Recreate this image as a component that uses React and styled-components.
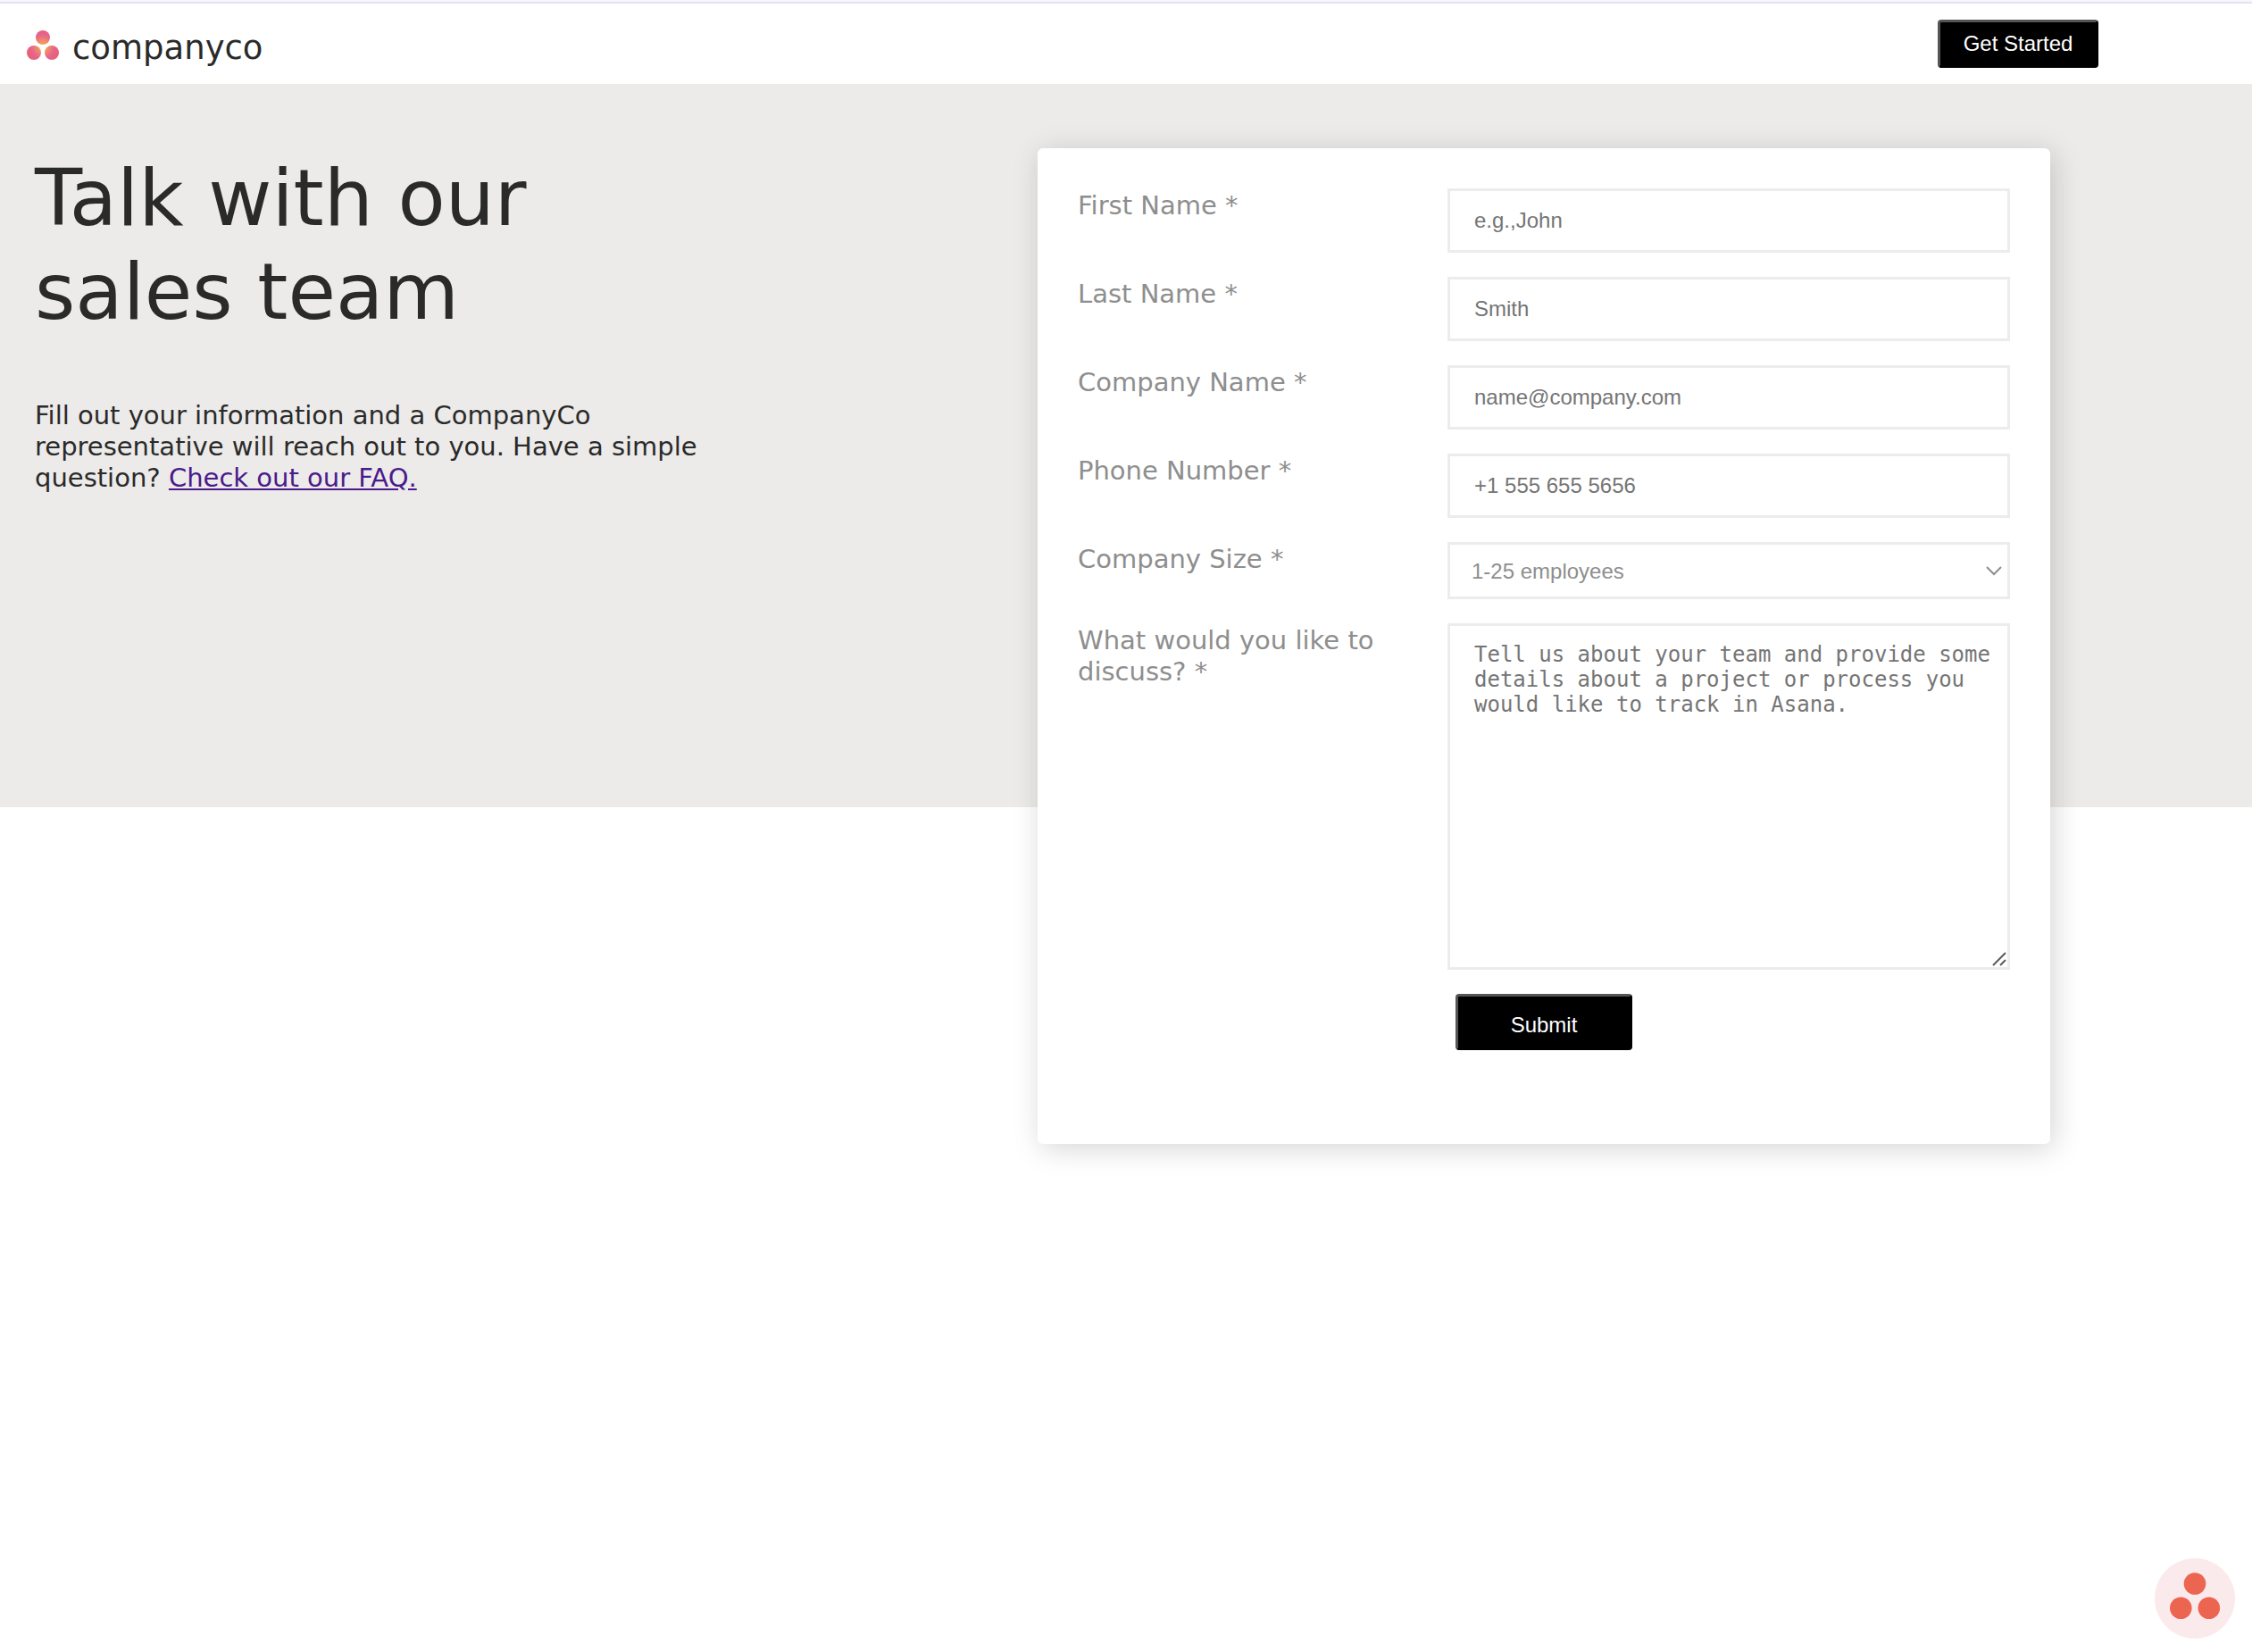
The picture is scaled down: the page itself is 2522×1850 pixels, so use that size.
import React from "react";
import styled, { createGlobalStyle } from "styled-components";

const sans = '"DejaVu Sans", Verdana, sans-serif';
const controlFont = '"Liberation Sans", Arial, sans-serif';
const ink = "#2a2a2a";

const GlobalStyle = createGlobalStyle`
  * { box-sizing: border-box; }
  body {
    margin: 0;
    background: #ffffff;
    color: ${ink};
    font-family: ${sans};
  }
`;

const Page = styled.div`
  min-height: 100vh;
`;

const Header = styled.header`
  display: flex;
  align-items: center;
  justify-content: space-between;
  height: 94px;
  padding: 2px 172px 0 30px;
  background: #ffffff;
  border-top: 2px solid #f7f7fe;
  box-shadow: inset 0 2px 0 #e2e2f0;
`;

const Brand = styled.a`
  display: flex;
  align-items: center;
  gap: 15px;
  padding-top: 8px;
  color: ${ink};
  font-size: 37px;
  line-height: 43px;
  text-decoration: none;
  > svg { margin-bottom: 4px; }
`;

const Button = styled.button`
  height: ${(p) => (p.$large ? 63 : 54)}px;
  width: ${(p) => (p.$large ? 198 : 180)}px;
  margin: 0;
  padding: ${(p) => (p.$large ? "6px 0 0" : "0")};
  border: 3px solid #000000;
  border-top-color: #555555;
  border-left-color: #555555;
  border-radius: 4px;
  background: #000000;
  color: #ffffff;
  font-family: ${controlFont};
  font-size: 24px;
  line-height: 28px;
  cursor: pointer;
`;

const Hero = styled.main`
  display: flex;
  align-items: flex-start;
  justify-content: space-between;
  height: 810px;
  padding: 72px 226px 0 39px;
  background: #ecebe9;
`;

const Intro = styled.section`
  width: 760px;
  padding-top: 4px;
`;

const Title = styled.h1`
  max-width: 640px;
  margin: 0 0 68px;
  font-size: 87px;
  font-weight: 400;
  line-height: 105px;
`;

const Lead = styled.p`
  margin: 0;
  font-size: 29px;
  line-height: 35px;
`;

const FaqLink = styled.a`
  color: #4b1a8c;
`;

const Card = styled.form`
  display: flex;
  flex-direction: column;
  gap: 27px;
  flex: none;
  width: 45%;
  min-width: 1134px;
  padding: 45px 45px 105px;
  border-radius: 6px;
  background: #ffffff;
  box-shadow: 4px 5px 32px rgba(0, 0, 0, 0.17);
`;

const Row = styled.div`
  display: grid;
  grid-template-columns: 414px 1fr;
  align-items: start;
`;

const Label = styled.label`
  padding: 2px 60px 0 0;
  color: #8e8e8e;
  font-size: 29px;
  line-height: 35px;
`;

const Input = styled.input`
  width: 100%;
  height: 72px;
  padding: 0 27px;
  border: 3px solid #ececec;
  border-radius: 0;
  background: #ffffff;
  color: ${ink};
  font-family: ${controlFont};
  font-size: 24px;
  &::placeholder { color: #757575; opacity: 1; }
`;

const TextAreaBox = styled.div`
  display: grid;
  > * { grid-area: 1 / 1; }
  > svg { place-self: end; margin: 4px; pointer-events: none; }
`;

const TextArea = styled.textarea`
  display: block;
  width: 100%;
  height: 388px;
  padding: 18px 18px 18px 27px;
  border: 3px solid #ececec;
  border-radius: 0;
  background: #ffffff;
  color: ${ink};
  font-family: "DejaVu Sans Mono", monospace;
  font-size: 24px;
  line-height: 28px;
  resize: vertical;
  &::placeholder { color: #757575; opacity: 1; }
  &::-webkit-resizer { background: transparent; }
`;

const SelectBox = styled.div`
  display: grid;
  align-items: center;
  > * { grid-area: 1 / 1; }
  > svg { justify-self: end; margin-right: 9px; pointer-events: none; }
`;

const Select = styled.select`
  width: 100%;
  height: 64px;
  padding: 0 27px 0 24px;
  border: 3px solid #ececec;
  border-radius: 0;
  appearance: none;
  background: #ffffff;
  color: #8e8e8e;
  font-family: ${controlFont};
  font-size: 24px;
`;

const Actions = styled.div`
  display: flex;
  padding-left: 423px;
`;

const HelpButton = styled.button`
  position: fixed;
  right: 19px;
  bottom: 15px;
  width: 90px;
  height: 90px;
  padding: 0;
  border: 0;
  border-radius: 50%;
  background: #fbeaec;
  cursor: pointer;
  > svg { display: block; }
`;

const BrandMark = () => (
  <svg width="36" height="34" viewBox="0 0 36 34" aria-hidden="true">
    <defs>
      <radialGradient id="mark" gradientUnits="userSpaceOnUse" cx="18" cy="18" r="22">
        <stop offset="0" stopColor="#f8b04a" />
        <stop offset="0.15" stopColor="#f3a054" />
        <stop offset="0.6" stopColor="#e6638f" />
        <stop offset="1" stopColor="#ea5f62" />
      </radialGradient>
    </defs>
    <g fill="url(#mark)">
      <circle cx="18" cy="8" r="8" />
      <circle cx="8" cy="25" r="8" />
      <circle cx="28" cy="25" r="8" />
    </g>
  </svg>
);

const fields = [
  { id: "first", label: "First Name *", placeholder: "e.g.,John", type: "text" },
  { id: "last", label: "Last Name *", placeholder: "Smith", type: "text" },
  { id: "company", label: "Company Name *", placeholder: "name@company.com", type: "text" },
  { id: "phone", label: "Phone Number *", placeholder: "+1 555 655 5656", type: "tel" },
];

export default function App() {
  return (
    <Page>
      <GlobalStyle />
      <Header>
        <Brand href="#">
          <BrandMark />
          companyco
        </Brand>
        <Button type="button">Get Started</Button>
      </Header>
      <Hero>
        <Intro>
          <Title>Talk with our sales team</Title>
          <Lead>
            Fill out your information and a CompanyCo representative will reach out to you. Have a
            simple question? <FaqLink href="#">Check out our FAQ.</FaqLink>
          </Lead>
        </Intro>
        <Card onSubmit={(e) => e.preventDefault()}>
          {fields.map((f) => (
            <Row key={f.id}>
              <Label htmlFor={f.id}>{f.label}</Label>
              <Input id={f.id} type={f.type} placeholder={f.placeholder} />
            </Row>
          ))}
          <Row>
            <Label htmlFor="size">Company Size *</Label>
            <SelectBox>
              <Select id="size">
                <option>1-25 employees</option>
              </Select>
              <svg width="18" height="11" viewBox="0 0 18 11" aria-hidden="true">
                <path d="M1 1l8 8 8-8" fill="none" stroke="#8e8e8e" strokeWidth="2" />
              </svg>
            </SelectBox>
          </Row>
          <Row>
            <Label htmlFor="topic">What would you like to discuss? *</Label>
            <TextAreaBox>
              <TextArea
                id="topic"
                placeholder="Tell us about your team and provide some details about a project or process you would like to track in Asana."
              />
              <svg width="16" height="16" viewBox="0 0 16 16" aria-hidden="true">
                <path d="M1 15L15 1M9 15l6-6" fill="none" stroke="#5c5c5c" strokeWidth="2" />
              </svg>
            </TextAreaBox>
          </Row>
          <Actions>
            <Button $large type="submit">Submit</Button>
          </Actions>
        </Card>
      </Hero>
      <HelpButton type="button" aria-label="Help">
        <svg width="90" height="90" viewBox="0 0 90 90" fill="#ec6551" aria-hidden="true">
          <circle cx="45" cy="28.5" r="12.3" />
          <circle cx="29.3" cy="55.7" r="12.3" />
          <circle cx="60.8" cy="55.7" r="12.3" />
        </svg>
      </HelpButton>
    </Page>
  );
}
